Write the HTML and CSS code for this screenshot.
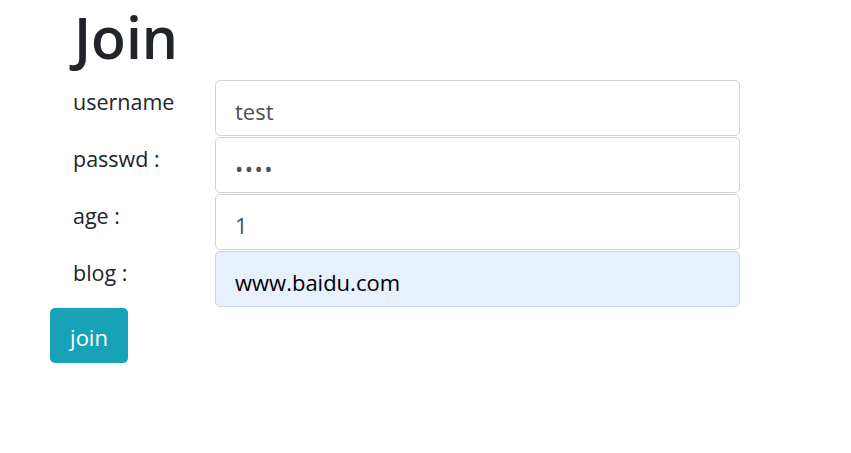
FILE: index.html
```html
<!DOCTYPE html>
<html lang="en">
<head>
<meta charset="utf-8">
<title>Join</title>
<link rel="stylesheet" href="styles.css">
</head>
<body>
<div class="page">
  <h1 class="title">Join</h1>
  <form class="form">
    <div class="row">
      <label class="label" for="u">username</label>
      <input class="field" id="u" type="text" value="test">
    </div>
    <div class="row">
      <label class="label" for="p">passwd :</label>
      <input class="field field-secret" id="p" type="password" value="test">
    </div>
    <div class="row">
      <label class="label" for="a">age :</label>
      <input class="field" id="a" type="text" value="1">
    </div>
    <div class="row">
      <label class="label" for="b">blog :</label>
      <input class="field field-filled" id="b" type="text" value="www.baidu.com">
    </div>
    <button class="btn" type="button">join</button>
  </form>
</div>
</body>
</html>
```

FILE: styles.css
```css
* { box-sizing: border-box; }
html, body { margin: 0; padding: 0; background: #fff; }
body {
  font-family: "Open Sans", "Noto Sans", sans-serif;
  color: #212529;
  font-size: 22px;
}
.page {
  padding-left: 50px;
}
.title {
  margin: 0 0 7px 0;
  padding: 2px 0 0 24px;
  font-size: 57px;
  font-weight: 600;
  line-height: 71px;
  color: #212529;
}
.form {
  display: flex;
  flex-direction: column;
  gap: 1px;
  align-items: flex-start;
}
.row {
  display: grid;
  grid-template-columns: 165px 525px;
}
.label {
  padding: 6px 0 0 23px;
  line-height: 1.5;
  font-size: 21.5px;
  color: #212529;
}
.field {
  height: 56px;
  width: 525px;
  border: 1px solid #ced4da;
  border-radius: 5px;
  padding: 6px 19px 0;
  font-family: inherit;
  font-size: 22px;
  color: #495057;
  background: #fff;
  outline: none;
}
.field-secret {
  letter-spacing: 1.5px;
}
.field-filled {
  background: #e8f0fe;
  color: #000;
}
.btn {
  width: 78px;
  height: 55px;
  border: none;
  border-radius: 5px;
  background: #17a2b8;
  color: #fff;
  font-family: inherit;
  font-size: 22px;
  padding: 3px 0 0;
  cursor: pointer;
}
```
